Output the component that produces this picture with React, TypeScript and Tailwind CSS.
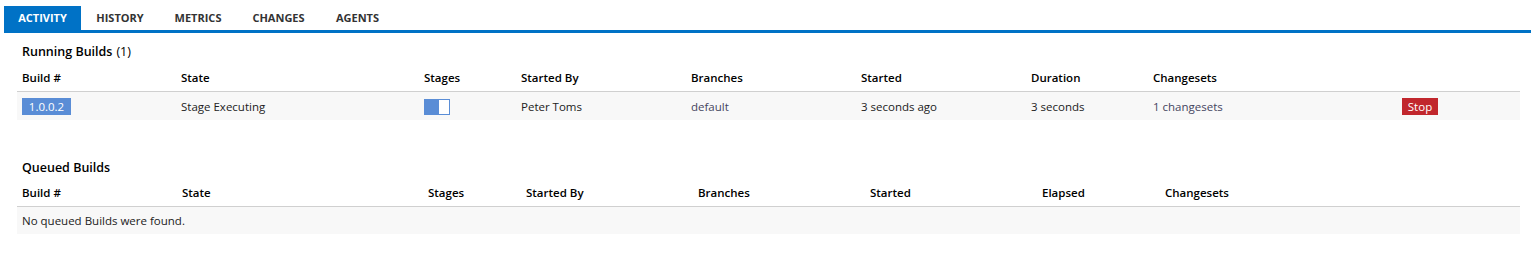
import React from "react";

const font = { fontFamily: '"Open Sans", "Noto Sans", sans-serif' };

const runCols = "grid-cols-[159px_243px_97px_170px_170px_170px_122px_249px_1fr]";
const queueCols = "grid-cols-[160px_246px_98px_172px_172px_172px_123px_1fr]";

function Tabs() {
  const tabs = [
    { label: "ACTIVITY", w: "w-[77px]", active: true },
    { label: "HISTORY", w: "w-[78px]" },
    { label: "METRICS", w: "w-[78px]" },
    { label: "CHANGES", w: "w-[83px]" },
    { label: "AGENTS", w: "w-[75px]" },
  ];
  return (
    <div className="pt-[6px] pl-[4px]">
      <div className="flex h-[24px]">
        {tabs.map((t) => (
          <div
            key={t.label}
            className={`${t.w} flex items-center justify-center pt-[1px] text-[11px] font-bold ${
              t.active ? "bg-[#0072c6] text-white" : "text-[#333]"
            }`}
          >
            {t.label}
          </div>
        ))}
      </div>
      <div className="h-[3px] bg-[#0072c6]" />
    </div>
  );
}

export default function App() {
  const runHeaders = ["Build #", "State", "Stages", "Started By", "Branches", "Started", "Duration", "Changesets", ""];
  const queueHeaders = ["Build #", "State", "Stages", "Started By", "Branches", "Started", "Elapsed", "Changesets"];
  return (
    <div className="w-[1531px] h-[264px] bg-white text-[11.5px] text-[#222]" style={font}>
      <Tabs />
      <div className="pl-[17px] pr-[11px]">
        <div className="mt-[9px] h-[20px] flex items-center pl-[5px] text-[12.5px] text-black">
          <span className="font-semibold">Running Builds</span>
          <span className="ml-[4px]">(1)</span>
        </div>
        <div className={`grid ${runCols} h-[30px] items-center pt-[3px] border-b border-[#d0d0d0] font-semibold text-black`}>
          {runHeaders.map((h, i) => (
            <div key={i} className="pl-[5px]">{h}</div>
          ))}
        </div>
        <div className={`grid ${runCols} h-[28px] items-center pt-[1px] bg-[#f8f8f8]`}>
          <div className="pl-[5px]">
            <span className="inline-flex h-[17px] w-[49px] items-center justify-center bg-[#5a8dd6] text-white">1.0.0.2</span>
          </div>
          <div className="pl-[5px]">Stage Executing</div>
          <div className="pl-[5px] flex">
            <div className="flex h-[16px] w-[26px] border border-[#5a8dd6] bg-white">
              <div className="w-[14px] bg-[#5a8dd6]" />
            </div>
          </div>
          <div className="pl-[5px]">Peter Toms</div>
          <div className="pl-[5px] text-[#45455f]">default</div>
          <div className="pl-[5px]">3 seconds ago</div>
          <div className="pl-[5px]">3 seconds</div>
          <div className="pl-[5px] text-[#45455f]">1 changesets</div>
          <div className="pl-[5px]">
            <span className="inline-flex h-[17px] w-[36px] items-center justify-center bg-[#c1272d] text-white">Stop</span>
          </div>
        </div>

        <div className="mt-[38px] h-[20px] flex items-center pl-[5px] text-[12.5px] font-semibold text-black">
          Queued Builds
        </div>
        <div className={`grid ${queueCols} h-[29px] items-center pt-[1px] border-b border-[#d0d0d0] font-semibold text-black`}>
          {queueHeaders.map((h, i) => (
            <div key={i} className="pl-[5px]">{h}</div>
          ))}
        </div>
        <div className="h-[27px] flex items-center pt-[1px] pl-[5px] bg-[#f8f8f8]">No queued Builds were found.</div>
      </div>
    </div>
  );
}
